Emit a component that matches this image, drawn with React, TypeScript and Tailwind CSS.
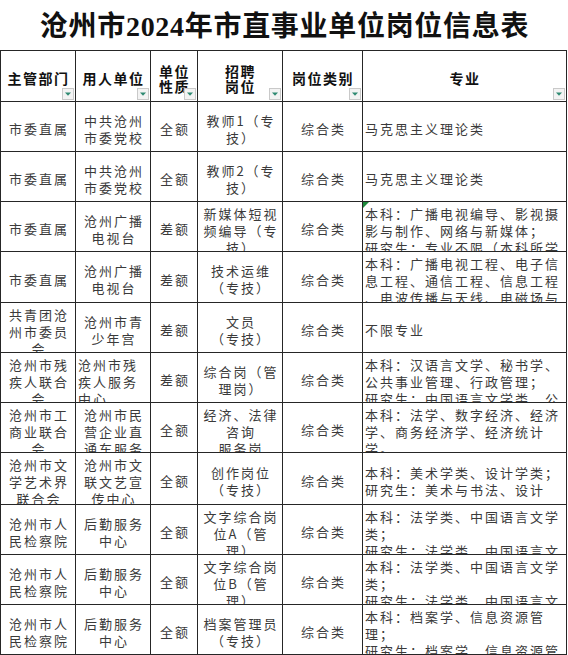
type Cell = {
  lines: string[];
  left?: boolean;
  top?: boolean;
  mark?: boolean;
};

const rows: Cell[][] = [
  [
    { lines: ["市委直属"] },
    { lines: ["中共沧州", "市委党校"] },
    { lines: ["全额"] },
    { lines: ["教师1（专", "技）"] },
    { lines: ["综合类"] },
    { lines: ["马克思主义理论类"], left: true },
  ],
  [
    { lines: ["市委直属"] },
    { lines: ["中共沧州", "市委党校"] },
    { lines: ["全额"] },
    { lines: ["教师2（专", "技）"] },
    { lines: ["综合类"] },
    { lines: ["马克思主义理论类"], left: true },
  ],
  [
    { lines: ["市委直属"] },
    { lines: ["沧州广播", "电视台"] },
    { lines: ["差额"] },
    { lines: ["新媒体短视", "频编导（专", "技）"], top: true },
    { lines: ["综合类"] },
    {
      lines: ["本科：广播电视编导、影视摄", "影与制作、网络与新媒体；", "研究生：专业不限（本科所学"],
      left: true,
      top: true,
      mark: true,
    },
  ],
  [
    { lines: ["市委直属"] },
    { lines: ["沧州广播", "电视台"] },
    { lines: ["差额"] },
    { lines: ["技术运维", "（专技）"] },
    { lines: ["综合类"] },
    {
      lines: ["本科：广播电视工程、电子信", "息工程、通信工程、信息工程", "、电波传播与天线、电磁场与"],
      left: true,
      top: true,
    },
  ],
  [
    { lines: ["共青团沧", "州市委员", "会"], top: true },
    { lines: ["沧州市青", "少年宫"] },
    { lines: ["差额"] },
    { lines: ["文员", "（专技）"] },
    { lines: ["综合类"] },
    { lines: ["不限专业"], left: true },
  ],
  [
    { lines: ["沧州市残", "疾人联合", "会"], top: true },
    { lines: ["沧州市残", "疾人服务", "中心"], top: true, left: true },
    { lines: ["差额"] },
    { lines: ["综合岗（管", "理岗）"] },
    { lines: ["综合类"] },
    {
      lines: ["本科：汉语言文学、秘书学、", "公共事业管理、行政管理；", "研究生：中国语言文学类、公"],
      left: true,
      top: true,
    },
  ],
  [
    { lines: ["沧州市工", "商业联合", "会"], top: true },
    { lines: ["沧州市民", "营企业直", "通车服务"], top: true },
    { lines: ["全额"] },
    { lines: ["经济、法律", "咨询", "服务岗"], top: true },
    { lines: ["综合类"] },
    {
      lines: ["本科：法学、数字经济、经济", "学、商务经济学、经济统计", "学。"],
      left: true,
      top: true,
    },
  ],
  [
    { lines: ["沧州市文", "学艺术界", "联合会"], top: true },
    { lines: ["沧州市文", "联文艺宣", "传中心"], top: true },
    { lines: ["全额"] },
    { lines: ["创作岗位", "（专技）"] },
    { lines: ["综合类"] },
    { lines: ["本科：美术学类、设计学类；", "研究生：美术与书法、设计"], left: true },
  ],
  [
    { lines: ["沧州市人", "民检察院"] },
    { lines: ["后勤服务", "中心"] },
    { lines: ["全额"] },
    { lines: ["文字综合岗", "位A（管", "理）"], top: true },
    { lines: ["综合类"] },
    { lines: ["本科：法学类、中国语言文学", "类；", "研究生：法学类、中国语言文"], left: true, top: true },
  ],
  [
    { lines: ["沧州市人", "民检察院"] },
    { lines: ["后勤服务", "中心"] },
    { lines: ["全额"] },
    { lines: ["文字综合岗", "位B（管", "理）"], top: true },
    { lines: ["综合类"] },
    { lines: ["本科：法学类、中国语言文学", "类；", "研究生：法学类、中国语言文"], left: true, top: true },
  ],
  [
    { lines: ["沧州市人", "民检察院"] },
    { lines: ["后勤服务", "中心"] },
    { lines: ["全额"] },
    { lines: ["档案管理员", "（专技）"] },
    { lines: ["综合类"] },
    { lines: ["本科：档案学、信息资源管", "理；", "研究生：档案学、信息资源管"], left: true, top: true },
  ],
];

const headers: string[][] = [["主管部门"], ["用人单位"], ["单位", "性质"], ["招聘", "岗位"], ["岗位类别"], ["专业"]];

function FilterButton() {
  return (
    <div className="absolute right-px bottom-px flex h-[12px] w-[12px] items-center justify-center border border-[#c9c9c9] bg-[#f3f3f3]">
      <svg width="6" height="4" viewBox="0 0 6 4">
        <path d="M0 0.5h6L3 3.8z" fill="#2f8a72" />
      </svg>
    </div>
  );
}

function DataCell({ cell }: { cell: Cell }) {
  return (
    <div
      className={`relative flex flex-col overflow-hidden bg-white ${
        cell.top ? "justify-start pt-[3px]" : "justify-center pt-1"
      } ${cell.left ? "items-start pl-[2px]" : "items-center pl-[2px]"}`}
    >
      {cell.mark && (
        <svg className="absolute left-0 top-0" width="6" height="6" viewBox="0 0 6 6">
          <path d="M0 0h6L0 6z" fill="#1e8a3c" />
        </svg>
      )}
      {cell.lines.map((line, i) => (
        <div key={i} className="whitespace-nowrap leading-[17px]">
          {line}
        </div>
      ))}
    </div>
  );
}

export default function App() {
  return (
    <div className="h-[655px] w-[568px] overflow-hidden bg-white">
      <div className="flex h-[50px] items-center justify-center pt-[4px] pl-[1px]">
        <h1 className="whitespace-nowrap font-['Liberation_Serif','Noto_Sans_CJK_SC',serif] text-[28px] font-bold leading-none tracking-[0.7px] text-[#111]">
          沧州市2024年市直事业单位岗位信息表
        </h1>
      </div>

      <div className="grid w-[567px] grid-cols-[74px_74px_46px_84px_79px_1fr] grid-rows-[50px_49px_49px_49px_50px_49px_49px_49px_51px_49px_49px_49px] gap-px bg-[#262626] p-px font-['Noto_Sans_CJK_SC',sans-serif] text-[13px] tracking-[2px] text-[#3a3a3a]">
        {headers.map((h, i) => (
          <div
            key={i}
            className="relative flex flex-col items-center justify-center bg-white pt-[5px] pl-[1px] text-[14px] font-bold leading-[15px] tracking-[1.5px] text-[#111]"
          >
            {h.map((line, j) => (
              <div key={j} className="whitespace-nowrap">
                {line}
              </div>
            ))}
            <FilterButton />
          </div>
        ))}
        {rows.map((row, r) =>
          row.map((cell, c) => <DataCell key={`${r}-${c}`} cell={cell} />)
        )}
      </div>
    </div>
  );
}
